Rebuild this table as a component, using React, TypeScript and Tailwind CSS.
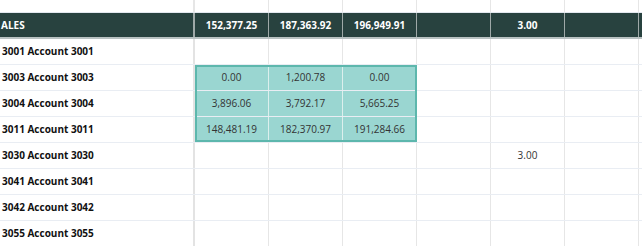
import React from "react";

const cols = 6;
type Row = { label: string; vals: string[]; teal?: boolean };
const rows: Row[] = [
  { label: "3001 Account 3001", vals: ["", "", "", "", "", ""] },
  { label: "3003 Account 3003", vals: ["0.00", "1,200.78", "0.00", "", "", ""], teal: true },
  { label: "3004 Account 3004", vals: ["3,896.06", "3,792.17", "5,665.25", "", "", ""], teal: true },
  { label: "3011 Account 3011", vals: ["148,481.19", "182,370.97", "191,284.66", "", "", ""], teal: true },
  { label: "3030 Account 3030", vals: ["", "", "", "", "3.00", ""] },
  { label: "3041 Account 3041", vals: ["", "", "", "", "", ""] },
  { label: "3042 Account 3042", vals: ["", "", "", "", "", ""] },
  { label: "3055 Account 3055", vals: ["", "", "", "", "", ""] },
];
const header = ["152,377.25", "187,363.92", "196,949.91", "", "3.00", ""];

export default function App() {
  return (
    <div
      className="relative w-[642px] h-[246px] overflow-hidden bg-white text-[10px] text-[#222]"
      style={{ fontFamily: '"Open Sans", "Noto Sans", sans-serif' }}
    >
      {/* top spacer row */}
      <div className="flex h-[13px] border-b border-[#e3e8ef]">
        <div className="w-[195px] shrink-0 border-r-2 border-[#e6e6e6]" />
        {Array.from({ length: cols + 1 }).map((_, i) => (
          <div key={i} className="w-[74px] shrink-0 border-r border-[#e6e6e6]" />
        ))}
      </div>
      {/* header */}
      <div className="flex h-[26px] bg-[#28423f] border-b-2 border-[#b9c2c2] text-white font-bold">
        <div className="w-[195px] shrink-0 flex items-center pl-[1px] border-r-2 border-[#9fa9a8]">ALES</div>
        {header.map((h, i) => (
          <div key={i} className="w-[74px] shrink-0 flex items-center justify-center border-r border-[#9fa9a8]">
            {h}
          </div>
        ))}
        <div className="w-[74px] shrink-0" />
      </div>
      {rows.map((r, ri) => (
        <div key={ri} className="flex h-[26px] border-b border-[#e9edf3]">
          <div className="w-[195px] shrink-0 flex items-center pl-[2px] font-bold text-[#111] border-r-2 border-[#e3e3e3]">
            {r.label}
          </div>
          {r.vals.map((v, i) => {
            const teal = r.teal && i < 3;
            return (
              <div
                key={i}
                className={
                  "w-[74px] shrink-0 flex items-center justify-center border-r " +
                  (teal ? "bg-[#9ad6d1] border-[#dcefed] text-[#333]" : "border-[#e6e6e6] text-[#333]")
                }
              >
                {v}
              </div>
            );
          })}
          <div className="w-[74px] shrink-0" />
        </div>
      ))}
      {/* selection outline */}
      <div className="absolute left-[195px] top-[65px] w-[222px] h-[77px] border-2 border-[#5db7ad] pointer-events-none" />
    </div>
  );
}
